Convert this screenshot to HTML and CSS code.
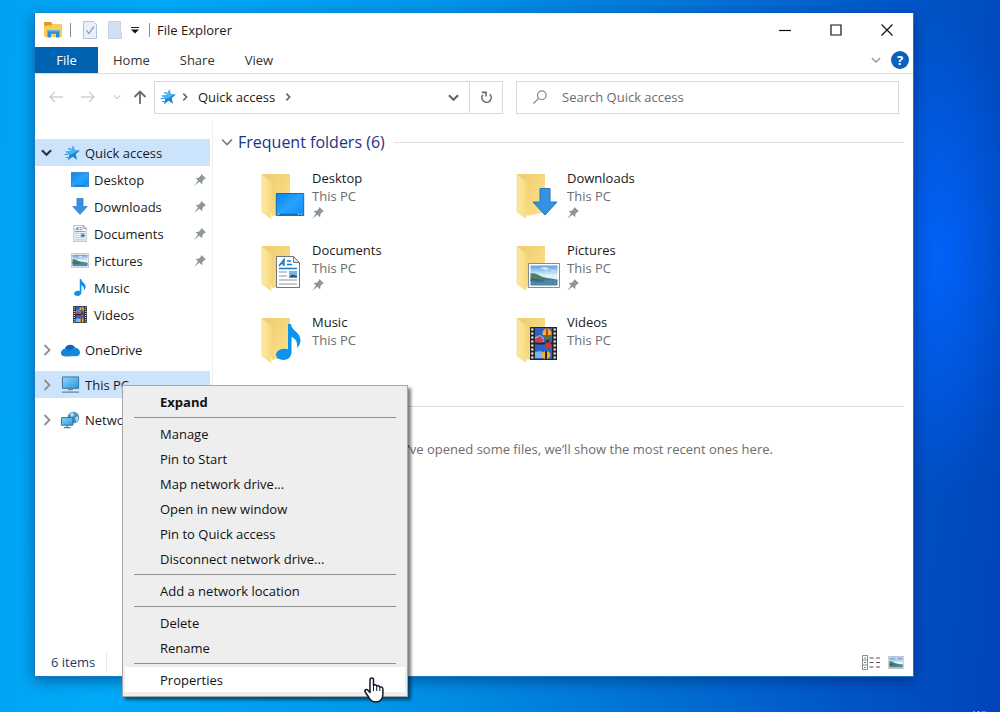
FILE: index.html
```html
<!DOCTYPE html>
<html lang="en">
<head>
    <meta charset="UTF-8">
    <meta name="viewport" content="width=device-width, initial-scale=1.0">
    <title>File Explorer</title>
    <link rel="stylesheet" href="styles.css">
</head>
<body>
    <!-- Icon set -->
    <svg class="icon-set" aria-hidden="true">
        <defs>
            <linearGradient id="gBlue" x1="0" y1="0" x2="1" y2="1">
                <stop offset="0" stop-color="#0a84ee"/><stop offset=".5" stop-color="#27a2ff"/><stop offset="1" stop-color="#0a8cf5"/>
            </linearGradient>
            <linearGradient id="gBack" x1="0" y1="0" x2="1" y2="1">
                <stop offset="0" stop-color="#efcd6e"/><stop offset="1" stop-color="#fbe08c"/>
            </linearGradient>
            <linearGradient id="gFlap" x1="0" y1="0" x2="1" y2="0">
                <stop offset="0" stop-color="#fde9a6"/><stop offset="1" stop-color="#f7d978"/>
            </linearGradient>
            <linearGradient id="gSky" x1="0" y1="0" x2="0" y2="1">
                <stop offset="0" stop-color="#5a9fe0"/><stop offset=".5" stop-color="#e4f2fc"/>
            </linearGradient>
            <linearGradient id="gScreen" x1="0" y1="0" x2="1" y2="1">
                <stop offset="0" stop-color="#8fd6fb"/><stop offset="1" stop-color="#2a98e0"/>
            </linearGradient>
        </defs>

        <symbol id="pin" viewBox="0 0 12 12"><path fill="#8c969d" d="M7.500 0 12 4.600l-1.600.3-2 2.200-.2 3.200L5.300 7.800 0 12l4-5.400L1.600 4l3.200-.3L6.900 1.600z"/></symbol>
        <symbol id="star" viewBox="0 0 16 16">
            <path fill="#1c87d8" d="M9.300.5L10.800 5.300 16 5.600 11.800 8.900 13 14.800 8.600 11.800 3.800 15.500 5.400 9.800 1.500 6.800 6.700 5.700z"/>
            <path fill="#4db2f3" d="M9.300.5L10.800 5.300 14 5.600 8.500 9 5.700 9.500 1.500 6.800 6.700 5.700z"/>
            <path stroke="#2a96e4" stroke-width="1.200" d="M4 3.800h3M.5 9.500h4M2 12.500h2.500"/>
        </symbol>
        <symbol id="chev-right" viewBox="0 0 12 12"><path fill="none" stroke="currentColor" stroke-width="1.800" d="M3.500 1l5 5-5 5"/></symbol>
        <symbol id="chev-down" viewBox="0 0 12 12"><path fill="none" stroke="currentColor" stroke-width="1.600" d="M1 3.500l5 5 5-5"/></symbol>
        <symbol id="chev-bold" viewBox="0 0 12 12"><path fill="none" stroke="currentColor" stroke-width="2.400" d="M1 3.500l5 5 5-5"/></symbol>
        <symbol id="crumb" viewBox="0 0 12 12"><path fill="none" stroke="currentColor" stroke-width="2.400" d="M3.500 1l5 5-5 5"/></symbol>

        <symbol id="desktop" viewBox="0 0 32 26">
            <path fill="url(#gBlue)" stroke="#0a5dab" d="M.5.5h31v25H.5z"/>
            <path fill="#0b6cc0" d="M1 23.500h30V25H1z"/><path fill="#cfe9ff" d="M2 23.500h2v1H2zM25 23.500h1.500v1H25zM28 23.500h2v1h-2z"/>
        </symbol>
        <symbol id="download" viewBox="0 0 26 28"><path fill="#3592e2" stroke="#2274bd" d="M8 .5h10V14h7L13 27 1 14h7z"/></symbol>
        <symbol id="document" viewBox="0 0 24 32">
            <path fill="#fff" stroke="#70757a" d="M.5.5h17l6 6v25H.5z"/><path fill="#e4e7ea" stroke="#70757a" d="M17.500.5v6h6z"/>
            <path fill="none" stroke="#1b7ac8" stroke-width="1.500" d="M3 10L8 3.500V10M5.500 7.800H8M11 5h4M11 8.500h5M3 12.500h18"/>
            <path stroke="#8b959d" stroke-width="1.200" d="M3 16h8M3 20h8M3 24h18M3 28h18"/><path fill="#7ab4e4" d="M13 15h8v6.500h-8z"/><path fill="#28506f" d="M13 21.500l3-3 5 1.500v1.500z"/>
        </symbol>
        <symbol id="picture" viewBox="0 0 32 25">
            <path fill="#fff" stroke="#868b90" d="M.5.5h31v24H.5z"/><path fill="url(#gSky)" d="M2.500 2.500h27v20h-27z"/>
            <path fill="#4a8066" d="M2.500 10.500c4-1 7 1 11 3 5 1.700 9 2 16 3V18h-27z"/><path fill="#4d87ae" d="M2.500 17h27v5.500h-27z"/><path fill="#35536b" opacity=".6" d="M2.500 15.500c6 0 10 1 16 2.500-6 1-10 1-16 0z"/>
            <path fill="#fff" opacity=".7" d="M12 5l5-1 4 1.500-3 1.500zM22 8l4-1 2 1.500z"/>
        </symbol>
        <symbol id="music" viewBox="0 0 25 36"><path fill="#0c93ec" d="M12 0h3c0 7 10 8 9.500 17-.2 3-1.700 5-3.500 7 .6-6-1-9-5.500-11v15c0 5-3.500 8-8 8C3 36 0 33.800 0 30.800c0-4.500 6.500-7.500 12-5.500z"/></symbol>
        <symbol id="video" viewBox="0 0 27 33">
            <path fill="#262626" d="M0 0h27v33H0z"/><path fill="#2b62c9" d="M5 1h17v14.500H5zM5 17.500h17V32H5z"/>
            <path stroke="#f4f4f4" stroke-width="2.200" stroke-dasharray="2 2" d="M2.300 1.500V33M24.700 1.500V33"/>
            <path fill="#7fb5ef" d="M5 10l5-2 4 3v4H5zM5 25l6-1 3 4v3H5z"/><path fill="#d43b4e" d="M5 12l5-3 4 4-2 2.500H5z"/>
            <ellipse cx="17" cy="6.500" rx="4.500" ry="5" fill="#f3b229"/><path fill="#d5342c" d="M16 1.500h2v10h-2z"/><path fill="#55733a" d="M12.500 8h9L18 13h-2z"/>
            <ellipse cx="18" cy="18" rx="3" ry="3.500" fill="#d5342c"/><ellipse cx="16" cy="28" rx="4.500" ry="4" fill="#f3b229"/><path fill="#342a23" d="M15 24h2v8h-2zM16 13h3v2.500h-3z"/>
        </symbol>
        <symbol id="onedrive" viewBox="0 0 20 14">
            <path fill="#0d62b8" d="M4 6a6 6 0 0 1 11-1.500L12 10 3 9z"/><path fill="#1182d6" d="M0 10a4.300 4.300 0 0 1 4.500-4.300C7 5.700 9 8 12 9l-3 4.500H3.500A3.500 3.500 0 0 1 0 10z"/>
            <path fill="#1a86d9" d="M9 9c1-3 4-5 6.500-4.500C18 5 20 7 20 9.500c0 2.500-1.600 4-4 4H4c-1 0-2-.4-2.700-1z"/>
        </symbol>
        <symbol id="pc" viewBox="0 0 20 18">
            <path fill="url(#gScreen)" stroke="#3b6f96" d="M1.500.5h17v12h-17z"/><path fill="#70808c" d="M7.500 13h5v1.500h-5z"/><path stroke="#748a9a" stroke-width="1.400" d="M1 16.500h18"/>
        </symbol>
        <symbol id="network" viewBox="0 0 20 18">
            <circle cx="13" cy="6.500" r="6.200" fill="#4b92bd"/><path fill="#b1d9ec" d="M9 2l4-1 1 3-3 2zM15 6l3-1v4l-2 2z"/>
            <path fill="url(#gScreen)" stroke="#2672a8" d="M.5 6.500h12v8H.5z"/><path stroke="#4b7c9c" stroke-width="1.500" d="M6.500 14.500V17M3 17h7"/>
        </symbol>

        <symbol id="folder" viewBox="0 0 46 46">
            <path fill="url(#gBack)" d="M1 1h28v38L11 43 1 10z"/><path fill="url(#gFlap)" stroke="#f0d287" stroke-width=".6" d="M1 1l9 7.500c.6.500 1 1 1 2V36l-1.500 1 .5 8.500L1 39z"/>
        </symbol>
    </svg>

    <main class="window">
        <header class="titlebar">
            <svg class="app-icon" viewBox="0 0 18 16"><path fill="#d99a1d" d="M0 0h7l1.500 2H12v4H0z"/><path fill="#fbcd55" d="M0 3.500h7L8.500 2H18v13H0z"/><path fill="#2c8fd5" d="M3.500 15.500V8h12v7.500H12v-3.800H7v3.800z"/><path fill="#69b5e8" d="M3.500 8h12v1.500h-12z"/></svg>
            <span class="bar"></span>
            <button class="quick" aria-label="Properties"><svg viewBox="0 0 14 18"><path fill="#eaf0fa" stroke="#b5c3da" d="M.5.5h10l3 3v14H.5z"/><path fill="none" stroke="#91a3bd" stroke-width="1.300" d="M3.500 9.500L6 12.500l5-7"/></svg></button>
            <button class="quick quick-new" aria-label="New folder"><svg viewBox="0 0 14 18"><path fill="#d3dff3" stroke="#c5d2e8" d="M.5.5h12V12h1v5.500H.5z"/></svg></button>
            <button class="quick quick-more" aria-label="Customize toolbar"><svg viewBox="0 0 8 8"><path stroke="#222" d="M0 1.500h8"/><path fill="#111" d="M0 3.500h8L4 7.500z"/></svg></button>
            <span class="bar"></span>
            <h1>File Explorer</h1>
            <div class="window-buttons">
                <button aria-label="Minimize"><svg viewBox="0 0 12 12"><path stroke="#111" stroke-width="1.200" d="M0 6.500h12"/></svg></button>
                <button aria-label="Maximize"><svg viewBox="0 0 12 12"><path fill="none" stroke="#111" stroke-width="1.200" d="M1 1h10v10H1z"/></svg></button>
                <button aria-label="Close"><svg viewBox="0 0 12 12"><path stroke="#111" stroke-width="1.200" d="M.5.5l11 11M11.500.5l-11 11"/></svg></button>
            </div>
        </header>

        <nav class="tabs">
            <button class="tab file-tab">File</button>
            <button class="tab">Home</button>
            <button class="tab">Share</button>
            <button class="tab">View</button>
            <button class="ribbon-toggle" aria-label="Expand the ribbon"><svg><use href="#chev-down"/></svg></button>
            <button class="help" aria-label="Help">?</button>
        </nav>

        <div class="toolbar">
            <div class="history">
                <button aria-label="Back"><svg class="arrow" viewBox="0 0 14 12"><path fill="none" stroke="#cfcfcf" stroke-width="1.400" d="M14 6H1M6 1L1 6l5 5"/></svg></button>
                <button aria-label="Forward"><svg class="arrow" viewBox="0 0 14 12"><path fill="none" stroke="#cfcfcf" stroke-width="1.400" d="M0 6h13M8 1l5 5-5 5"/></svg></button>
                <button aria-label="Recent locations"><svg class="recent"><use href="#chev-down"/></svg></button>
                <button aria-label="Up"><svg class="up" viewBox="0 0 14 14"><path fill="none" stroke="#6b6b6b" stroke-width="1.800" d="M7 14V1.500M1.500 7L7 1.500 12.500 7"/></svg></button>
            </div>
            <div class="address">
                <svg class="star"><use href="#star"/></svg>
                <svg class="crumb"><use href="#crumb"/></svg>
                <button class="path">Quick access</button>
                <svg class="crumb"><use href="#crumb"/></svg>
                <button class="drop" aria-label="Previous locations"><svg><use href="#chev-bold"/></svg></button>
                <button class="refresh" aria-label="Refresh"><svg viewBox="0 0 14 14"><path fill="none" stroke="#666" stroke-width="1.700" d="M10.500 3.500A5 5 0 1 1 3 4.200M2 1.500h4.500V6"/></svg></button>
            </div>
            <label class="search">
                <svg viewBox="0 0 14 14"><path fill="none" stroke="#8a8a8a" stroke-width="1.200" d="M5.500 8.500L.5 13.500"/><circle cx="8.800" cy="5.200" r="4.300" fill="none" stroke="#8a8a8a" stroke-width="1.200"/></svg>
                <input type="text" placeholder="Search Quick access" aria-label="Search Quick access">
            </label>
        </div>

        <div class="panes">
            <aside class="sidebar">
                <ul class="tree">
                    <li class="node root selected open"><svg class="toggle"><use href="#chev-bold"/></svg><svg class="glyph star"><use href="#star"/></svg><a href="#">Quick access</a></li>
                    <li class="node child"><svg class="glyph"><use href="#desktop"/></svg><a href="#">Desktop</a><svg class="pin"><use href="#pin"/></svg></li>
                    <li class="node child"><svg class="glyph"><use href="#download"/></svg><a href="#">Downloads</a><svg class="pin"><use href="#pin"/></svg></li>
                    <li class="node child"><svg class="glyph"><use href="#document"/></svg><a href="#">Documents</a><svg class="pin"><use href="#pin"/></svg></li>
                    <li class="node child"><svg class="glyph"><use href="#picture"/></svg><a href="#">Pictures</a><svg class="pin"><use href="#pin"/></svg></li>
                    <li class="node child"><svg class="glyph"><use href="#music"/></svg><a href="#">Music</a></li>
                    <li class="node child"><svg class="glyph"><use href="#video"/></svg><a href="#">Videos</a></li>
                    <li class="node root"><svg class="toggle"><use href="#chev-right"/></svg><svg class="glyph"><use href="#onedrive"/></svg><a href="#">OneDrive</a></li>
                    <li class="node root selected">
                        <svg class="toggle"><use href="#chev-right"/></svg><svg class="glyph"><use href="#pc"/></svg><a href="#">This PC</a>
                        <!-- Context menu -->
                        <div class="menu" role="menu">
                            <button role="menuitem" class="default">Expand</button>
                            <hr>
                            <button role="menuitem">Manage</button>
                            <button role="menuitem">Pin to Start</button>
                            <button role="menuitem">Map network drive...</button>
                            <button role="menuitem">Open in new window</button>
                            <button role="menuitem">Pin to Quick access</button>
                            <button role="menuitem">Disconnect network drive...</button>
                            <hr>
                            <button role="menuitem">Add a network location</button>
                            <hr>
                            <button role="menuitem">Delete</button>
                            <button role="menuitem">Rename</button>
                            <hr>
                            <button role="menuitem" class="hover">Properties</button>
                            <svg class="cursor" viewBox="0 0 20 26"><path fill="#fff" stroke="#111827" stroke-width="1.500" stroke-linejoin="round" d="M6 15.500V3c0-2.600 3.500-2.600 3.500 0v5.500c1-1.200 3-.8 3.200.7 1-.9 2.800-.5 3 1 1.200-.7 3.200-.2 3.200 2V17c0 4.500-2.500 8-7 8-3.500 0-5.500-1.500-7-4.500L1.200 15c-1-2.200 1.500-3.300 3-1.500z"/><path stroke="#111827" d="M9.500 8v6M12.700 9.500V14M15.800 10.500V14"/></svg>
                        </div>
                    </li>
                    <li class="node root"><svg class="toggle"><use href="#chev-right"/></svg><svg class="glyph"><use href="#network"/></svg><a href="#">Network</a></li>
                </ul>
            </aside>

            <section class="content">
                <h2><svg><use href="#chev-down"/></svg>Frequent folders (6)</h2>
                <div class="folders">
                    <article class="folder">
                        <svg viewBox="0 0 46 46"><use href="#folder"/><use href="#desktop" x="13" y="20" width="32" height="23"/></svg>
                        <div><h3>Desktop</h3><p>This PC</p><svg class="pin"><use href="#pin"/></svg></div>
                    </article>
                    <article class="folder">
                        <svg viewBox="0 0 46 46"><use href="#folder"/><use href="#download" x="16" y="15" width="26" height="28"/></svg>
                        <div><h3>Downloads</h3><p>This PC</p><svg class="pin"><use href="#pin"/></svg></div>
                    </article>
                    <article class="folder">
                        <svg viewBox="0 0 46 46"><use href="#folder"/><use href="#document" x="15" y="11" width="24" height="32"/></svg>
                        <div><h3>Documents</h3><p>This PC</p><svg class="pin"><use href="#pin"/></svg></div>
                    </article>
                    <article class="folder">
                        <svg viewBox="0 0 46 46"><use href="#folder"/><use href="#picture" x="12" y="18" width="32" height="25"/></svg>
                        <div><h3>Pictures</h3><p>This PC</p><svg class="pin"><use href="#pin"/></svg></div>
                    </article>
                    <article class="folder">
                        <svg viewBox="0 0 46 46"><use href="#folder"/><use href="#music" x="15" y="7" width="25" height="36"/></svg>
                        <div><h3>Music</h3><p>This PC</p></div>
                    </article>
                    <article class="folder">
                        <svg viewBox="0 0 46 46"><use href="#folder"/><use href="#video" x="14" y="10" width="27" height="33"/></svg>
                        <div><h3>Videos</h3><p>This PC</p></div>
                    </article>
                </div>
                <h2><svg><use href="#chev-down"/></svg>Recent files (0)</h2>
                <p class="empty">After you’ve opened some files, we’ll show the most recent ones here.</p>
            </section>
        </div>

        <footer class="status">
            <span class="count">6 items</span>
            <div class="views">
                <button aria-label="Details view"><svg viewBox="0 0 18 15"><path fill="#fff" stroke="#8a8a8a" d="M.5.5h5v14h-5zM.5 5h5M.5 10h5"/><path stroke="#4c8cc5" d="M2 3h2"/><path stroke="#4a9a68" d="M2 7.500h2"/><path stroke="#d46a6a" d="M2 12.500h2"/><path stroke="#555" stroke-width="1.200" d="M7.500 3h4M14 3h4M7.500 7.500h4M14 7.500h4M7.500 12h4M14 12h4"/></svg></button>
                <button aria-label="Large icons view"><svg class="large"><use href="#picture"/></svg></button>
            </div>
        </footer>
    </main>
    <div class="watermark">Win</div>
</body>
</html>
```

FILE: styles.css
```css
* {
    box-sizing: border-box;
}
body {
    margin: 0;
    min-height: 100vh;
    padding: 13px 86px 35px 34px;
    display: flex;
    overflow: hidden;
    font-family: "Open Sans", "Noto Sans", sans-serif;
    font-size: 13px;
    line-height: 18px;
    color: #1a1a1a;
    background:
        radial-gradient(ellipse 80px 240px at 94% 36%, rgba(0, 100, 255, 0.9), rgba(0, 98, 240, 0)),
        linear-gradient(95deg, #00a2f2 0%, #00aaf8 15%, #0098ea 40%, #0074d6 65%, #0056c8 85%, #0044bb 100%);
}
button {
    font: inherit;
    color: inherit;
    background: none;
    border: none;
    padding: 0;
    display: flex;
    align-items: center;
    justify-content: center;
}
h1, h2, h3, p, ul {
    margin: 0;
    padding: 0;
    font-size: 13px;
    font-weight: normal;
}
a {
    color: inherit;
    text-decoration: none;
}
svg {
    flex: none;
    width: 12px;
    height: 12px;
}
.icon-set {
    position: absolute;
    width: 0;
    height: 0;
}
.window {
    flex: 1;
    display: flex;
    flex-direction: column;
    background: #fff;
    border: 1px solid #1878c8;
    border-top-width: 0;
    box-shadow: 0 4px 14px rgba(0, 20, 70, 0.45);
}

/* title bar */
.titlebar {
    display: flex;
    align-items: center;
    height: 34px;
    padding: 0 1px 0 9px;
}
.app-icon {
    width: 18px;
    height: 16px;
    margin-right: 8px;
}
.bar {
    width: 1px;
    height: 14px;
    background: #8a8a8a;
}
.quick {
    margin-left: 12px;
}
.quick svg {
    width: 14px;
    height: 18px;
}
.quick-new {
    margin-left: 11px;
}
.quick-more {
    margin: 0 10px 0 9px;
}
.quick-more svg {
    width: 8px;
    height: 8px;
}
.titlebar h1 {
    margin-left: 7px;
}
.window-buttons {
    display: flex;
    margin-left: auto;
}
.window-buttons button {
    width: 51px;
    height: 34px;
}

/* ribbon tabs */
.tabs {
    display: flex;
    align-items: center;
    height: 27px;
    border-bottom: 1px solid #dcdcdc;
}
.tab {
    height: 26px;
    padding: 0 15px;
    color: #333;
}
.file-tab {
    width: 63px;
    padding: 0;
    background: #0063b1;
    color: #fff;
}
.ribbon-toggle {
    margin-left: auto;
    color: #999;
}
.ribbon-toggle svg {
    width: 10px;
    height: 10px;
}
.help {
    width: 18px;
    height: 18px;
    margin: 0 4px 0 10px;
    border-radius: 50%;
    background: #0b62bd;
    color: #fff;
    font-weight: bold;
}

/* address row */
.toolbar {
    display: flex;
    align-items: center;
    height: 46px;
    padding: 0 14px;
}
.history {
    display: flex;
    align-items: center;
}
.arrow {
    width: 14px;
    height: 12px;
    margin-right: 18px;
}
.recent {
    width: 8px;
    height: 8px;
    margin-right: 12px;
    color: #ccc;
}
.up {
    width: 14px;
    height: 14px;
    margin-right: 7px;
}
.address {
    flex: 342;
    display: flex;
    align-items: center;
    height: 33px;
    margin-right: 13px;
    padding-left: 5px;
    border: 1px solid #d9d9d9;
}
.star {
    width: 16px;
    height: 16px;
}
.crumb {
    width: 8px;
    height: 8px;
    margin: 0 9px 0 5px;
    color: #666;
}
.path {
    margin-right: 4px;
}
.drop {
    margin-left: auto;
    padding: 0 10px;
    color: #666;
}
.drop svg {
    width: 11px;
    height: 11px;
}
.refresh {
    width: 33px;
    height: 31px;
    border-left: 1px solid #d9d9d9;
}
.refresh svg {
    width: 13px;
    height: 13px;
}
.search {
    flex: 365;
    display: flex;
    align-items: center;
    height: 33px;
    padding-left: 16px;
    border: 1px solid #d9d9d9;
}
.search svg {
    width: 14px;
    height: 14px;
}
.search input {
    flex: 1;
    min-width: 0;
    margin-left: 15px;
    padding: 0;
    border: none;
    outline: none;
    background: none;
    font: inherit;
}
.search input::placeholder {
    color: #6d6d6d;
    opacity: 1;
}

/* navigation tree */
.panes {
    flex: 1;
    display: flex;
}
.sidebar {
    width: 178px;
    padding: 19px 2px 0 0;
    border-right: 1px solid #f0f0f0;
}
.tree {
    list-style: none;
}
.node {
    position: relative;
    display: flex;
    align-items: center;
    height: 27px;
    padding-right: 4px;
}
.root {
    padding-left: 6px;
    margin-top: 8px;
}
.root.open {
    margin-top: 0;
}
.child {
    padding-left: 36px;
}
.selected {
    background: #cce4fb;
}
.toggle {
    margin-right: 8px;
    color: #8e8e8e;
}
.open .toggle {
    width: 11px;
    height: 11px;
    margin-right: 9px;
    color: #333;
}
.glyph {
    width: 19px;
    height: 18px;
    margin-right: 5px;
}
.child .glyph {
    width: 18px;
    height: 17px;
}
.glyph.star {
    width: 16px;
    height: 16px;
    margin: 0 5px 0 3px;
}
.node .pin {
    margin-left: auto;
}

/* folder list */
.content {
    flex: 1;
    padding: 11px 9px 0 8px;
}
.content h2 {
    display: flex;
    align-items: center;
    height: 22px;
    font-size: 16px;
    color: #1e3287;
}
.content h2 svg {
    margin-right: 5px;
    color: #777;
}
.content h2::after {
    content: "";
    flex: 1;
    height: 1px;
    margin-left: 9px;
    background: #dedede;
}
.folders {
    display: grid;
    grid-template-columns: repeat(auto-fill, 255px);
    grid-auto-rows: 72px;
    padding: 16px 0 10px 40px;
}
.folder {
    display: flex;
    gap: 5px;
}
.folder > svg {
    width: 46px;
    height: 46px;
    margin-top: 4px;
}
.folder p {
    color: #6d6d6d;
}
.folder .pin {
    display: block;
    margin-top: 2px;
}
.empty {
    margin-top: 23px;
    text-align: center;
    color: #6d6d6d;
}

/* status bar */
.status {
    display: flex;
    align-items: center;
    justify-content: space-between;
    height: 28px;
    padding: 0 9px 0 16px;
}
.count {
    padding-right: 11px;
    border-right: 1px solid #e5e5e5;
    color: #1e3a66;
}
.views {
    display: flex;
    gap: 8px;
}
.views svg {
    width: 18px;
    height: 15px;
}
.views .large {
    width: 16px;
    height: 13px;
}

/* context menu */
.menu {
    position: absolute;
    z-index: 2;
    top: 14px;
    left: 87px;
    width: 286px;
    padding: 3px 2px 4px;
    background: #eee;
    border: 1px solid #a6a6a6;
    box-shadow: 3px 3px 3px rgba(0, 0, 0, 0.5);
}
.menu button {
    width: 100%;
    height: 25px;
    padding-left: 35px;
    justify-content: flex-start;
    color: #111;
}
.menu .default {
    font-weight: bold;
}
.menu .hover {
    background: #fff;
}
.menu hr {
    height: 1px;
    margin: 3px 9px;
    border: none;
    background: #919191;
}
.cursor {
    position: absolute;
    right: 23px;
    bottom: -7px;
    width: 20px;
    height: 26px;
}

.watermark {
    position: absolute;
    right: 7px;
    bottom: -12px;
    font-size: 11px;
    color: #c8d8f2;
}
```
